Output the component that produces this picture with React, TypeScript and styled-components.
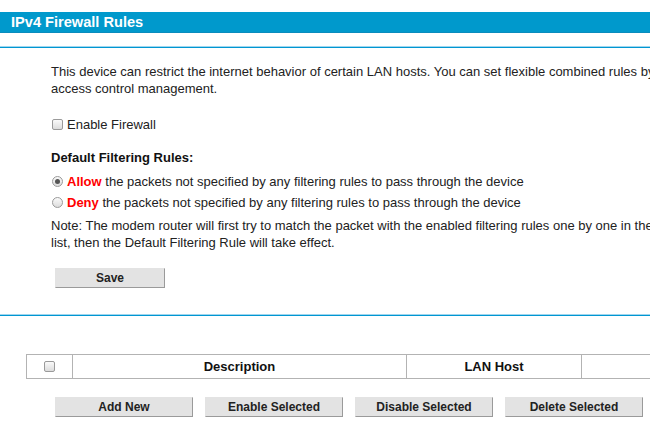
import React from "react";
import styled, { createGlobalStyle } from "styled-components";

const Global = createGlobalStyle`
  html, body { margin: 0; padding: 0; background: #fff; overflow: hidden; }
  body { font-family: "Liberation Sans", Arial, sans-serif; font-size: 13px; color: #222; }
`;

const Page = styled.div`
  width: 1000px;
  padding-top: 12px;
`;

const TitleBar = styled.div`
  height: 21px;
  background: #0099cc;
  border-bottom: 1px solid #0a8cbd;
  box-sizing: border-box;
  padding-left: 11px;
  color: #fff;
  font-weight: bold;
  font-size: 14.6px;
  line-height: 21px;
`;

const Divider = styled.div<{ $top: number }>`
  margin-top: ${(p) => p.$top}px;
  height: 1px;
  background: #0096d2;
  border-top: 1px solid #9fd6ee;
`;

const Section = styled.div`
  padding-left: 51px;
`;

const Para = styled.p<{ $top: number; $lh?: number }>`
  margin: ${(p) => p.$top}px 0 0;
  line-height: ${(p) => p.$lh ?? 17}px;
  white-space: nowrap;
`;

const Row = styled.label<{ $top: number; $h: number }>`
  display: flex;
  align-items: center;
  margin-top: ${(p) => p.$top}px;
  height: ${(p) => p.$h}px;
  padding-left: 1px;
  gap: 4px;
  white-space: nowrap;
`;

const Box = styled.span`
  display: inline-block;
  width: 11px;
  height: 11px;
  box-sizing: border-box;
  border: 1px solid #9a9a9a;
  border-radius: 2px;
  background: linear-gradient(#fafafa, #dcdcdc);
`;

const Radio = styled.span<{ $on?: boolean }>`
  display: inline-flex;
  align-items: center;
  justify-content: center;
  width: 11px;
  height: 11px;
  box-sizing: border-box;
  border: 1px solid #9a9a9a;
  border-radius: 50%;
  background: linear-gradient(#fafafa, #dcdcdc);
  &::after {
    content: "";
    width: 5px;
    height: 5px;
    border-radius: 50%;
    background: ${(p) => (p.$on ? "#555" : "transparent")};
  }
`;

const Heading = styled.div<{ $top: number }>`
  margin-top: ${(p) => p.$top}px;
  line-height: 16px;
  font-weight: bold;
  color: #111;
`;

const Red = styled.b`
  color: #ff0000;
`;

const Btn = styled.button`
  width: 138px;
  height: 20px;
  padding: 0;
  box-sizing: border-box;
  background: #e3e3e3;
  border: 1px solid #e3e3e3;
  border-right-color: #9a9a9a;
  border-bottom-color: #9a9a9a;
  font-family: "Liberation Sans", Arial, sans-serif;
  font-size: 12px;
  font-weight: bold;
  color: #222;
`;

const SaveBtn = styled(Btn)`
  width: 110px;
  margin: 17px 0 0 4px;
  display: block;
`;

const TableWrap = styled.div`
  margin-top: 38px;
  padding-left: 26px;
`;

const Table = styled.table`
  border-collapse: collapse;
  td {
    height: 23px;
    border: 1px solid #b3b3b3;
    text-align: center;
    font-weight: bold;
    color: #111;
    padding: 0;
  }
`;

const CheckCell = styled.td`
  width: 45px;
  line-height: 0;
`;

const BtnRow = styled.div`
  margin-top: 18px;
  padding-left: 55px;
  display: flex;
  gap: 12px;
`;

export default function App() {
  return (
    <Page>
      <Global />
      <TitleBar>IPv4 Firewall Rules</TitleBar>
      <Divider $top={13} />
      <Section>
        <Para $top={15}>
          This device can restrict the internet behavior of certain LAN hosts. You can set flexible combined rules by
          <br />
          access control management.
        </Para>
        <Row $top={19} $h={16}>
          <Box />
          Enable Firewall
        </Row>
        <Heading $top={18}>Default Filtering Rules:</Heading>
        <Row $top={5} $h={21}>
          <Radio $on />
          <span>
            <Red>Allow</Red> the packets not specified by any filtering rules to pass through the device
          </span>
        </Row>
        <Row $top={0} $h={21}>
          <Radio />
          <span>
            <Red>Deny</Red> the packets not specified by any filtering rules to pass through the device
          </span>
        </Row>
        <Para $top={4} $lh={17}>
          Note: The modem router will first try to match the packet with the enabled filtering rules one by one in the
          <br />
          list, then the Default Filtering Rule will take effect.
        </Para>
        <SaveBtn>Save</SaveBtn>
      </Section>
      <Divider $top={26} />
      <TableWrap>
        <Table>
          <tbody>
            <tr>
              <CheckCell>
                <Box />
              </CheckCell>
              <td style={{ width: 333 }}>Description</td>
              <td style={{ width: 174 }}>LAN Host</td>
              <td style={{ width: 174 }}></td>
            </tr>
          </tbody>
        </Table>
      </TableWrap>
      <BtnRow>
        <Btn>Add New</Btn>
        <Btn>Enable Selected</Btn>
        <Btn>Disable Selected</Btn>
        <Btn>Delete Selected</Btn>
      </BtnRow>
    </Page>
  );
}
